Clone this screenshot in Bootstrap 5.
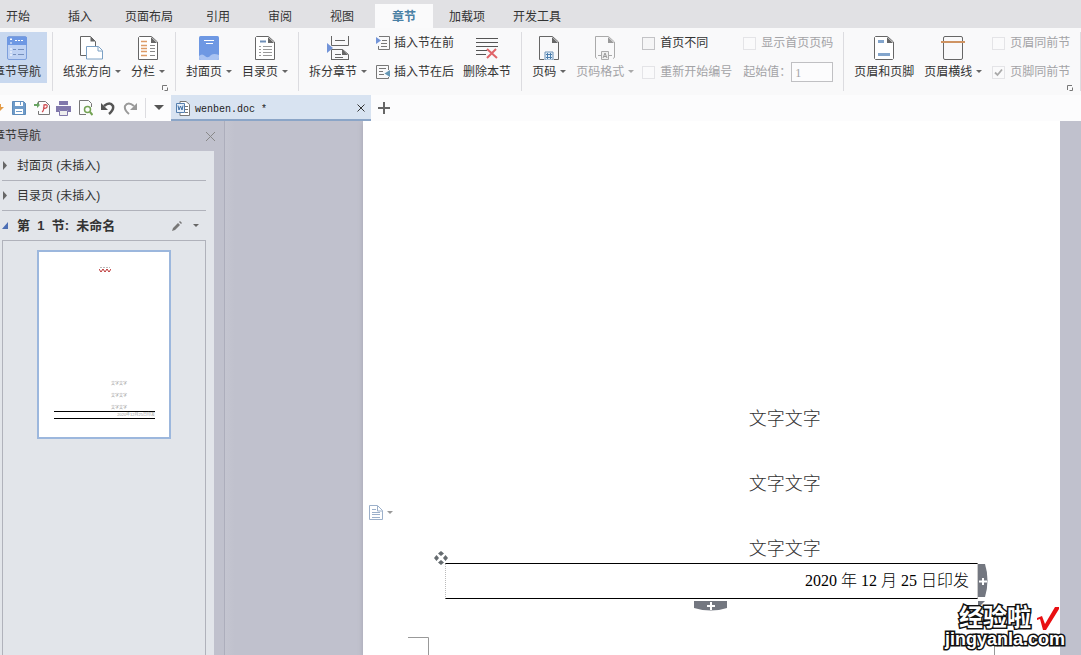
<!DOCTYPE html>
<html lang="zh-CN">
<head>
<meta charset="utf-8">
<meta name="viewport" content="width=device-width, initial-scale=1">
<title>wenben.doc</title>
<link href="https://cdn.jsdelivr.net/npm/bootstrap@5.3.0/dist/css/bootstrap.min.css" rel="stylesheet">
<style>
body{font:12px/16px "Liberation Sans","Noto Sans CJK SC",sans-serif;color:#333;background:#c0c1cd;overflow:hidden}
button{font:inherit;color:inherit;background:none;border:0;padding:0;white-space:nowrap}
svg{display:block;flex:none}
.tabs{background:#e1e1e4;padding-top:4px;gap:4px;margin-left:-11px}
.tabs a{color:#333;height:24px;line-height:26px;min-width:58px;padding:0 12px;text-align:center;text-decoration:none;white-space:nowrap}
.tabs a.active{background:#fafafb;color:#4a80a5;font-weight:700}
.ribbon{background:#f9f9fa;height:67px;padding-top:4px;gap:10px}
.tool{display:flex;flex-direction:column;align-items:center;gap:4px;height:51px;padding-top:4px;flex:none}
.tool.on{background:#c8d8ef;padding-left:6px;padding-right:6px;margin-left:-13px;margin-right:-5px}
.more::after{content:"";display:inline-block;border:3px solid transparent;border-top-color:#666;border-bottom:0;margin-left:4px;vertical-align:3px}
.more.pale::after{border-top-color:#999}
.rule{width:1px;height:59px;background:#dcdce0;flex:none}
.stack{padding-top:3px;gap:13px;white-space:nowrap;flex:none}
.stack button,.stack label{display:flex;align-items:center;height:16px}
.stack button{gap:4px}
.stack label{gap:5px}
.off{color:#a3a3a6}
.off.more::after,.off .more::after{border-top-color:#aaa}
.tick{appearance:none;width:13px;height:13px;border:1px solid #c3c3c6;background:#f5f5f6;margin:0;flex:none}
.tick:disabled{border-color:#e4e4e7;background:#fafafb}
.tick:checked{background:#fafafb url("data:image/svg+xml,%3Csvg xmlns='http://www.w3.org/2000/svg' viewBox='0 0 11 11'%3E%3Cpath d='M2 5.5L4.5 8 9 2.5' fill='none' stroke='%23aaa' stroke-width='1.8'/%3E%3C/svg%3E")}
.startat{width:42px;height:20px;border:1px solid #c0c0c3;background:#fcfcfd;color:#a3a3a6;padding:2px 3px 0;border-radius:0;font:12px/16px "Liberation Serif",serif}
.corner{position:absolute;bottom:4px}
.quick{background:#fcfcfd;height:26px}
.doctab{width:200px;background:#d8e3f1;border-bottom:2px solid #8ba5c7;padding:2px 5px 0;gap:5px}
.doctab a{display:block;font:10px/16px "Liberation Mono",monospace;color:#222;text-decoration:none;padding-top:3px}
.side{width:225px;border-right:1px solid #adaebc;flex:none}
.sidehead{height:30px;padding-right:8px}
.outline{width:214px;background:#e2e5ea;padding:0 8px 0 2px}
.entry{height:30px;border-bottom:1px solid #b0b2bb}
.entry button{display:flex;align-items:center;gap:9px;height:29px}
.entry .current{font-size:13px;font-weight:700;white-space:pre}
.thumbs{border:solid #b0b2bb;border-width:0 1px}
.thumb{width:134px;height:189px;border:2px solid #9cb7dd;background:#fff;margin:9px 0 0 34px;font-size:4px;line-height:6px;color:#999;padding:13px 14px 0 15px}
.tinyline{padding-left:57px;margin-bottom:6px}
.tinytable{border:solid #000;border-width:1px 0;height:8px;text-align:right;margin-top:-6px}
.canvas{background:linear-gradient(90deg,#c4c5d0,#c0c1cd 10px);padding:0 21px 0 138px}
.sheet{background:#fff;padding:284px 82px 0;box-shadow:0 2px 5px #a3a4b2;clip-path:inset(0 0 0 -8px)}
.para{font:300 18px/28px "Liberation Serif","Noto Sans CJK SC",serif;margin:0 0 37px 57%;color:#333}
.para.last{margin-bottom:0}
.issue{width:100%;border-collapse:separate;border-spacing:0}
.issue td{height:36px;border:solid #000;border-width:1px 0;border-left:1px dotted #bbb;border-right:1px solid #ccc;text-align:right;padding:0 8px;font:16px/30px "Liberation Serif","Noto Sans CJK SC",serif;font-weight:300;color:#000}
.handle{position:absolute}
.sign{position:absolute;right:16px;bottom:7px;text-align:center}
.sign span{display:block;color:#fff;-webkit-text-stroke:3px #111;paint-order:stroke fill;font-weight:700;white-space:nowrap}
.sign .cn{font-size:24px;line-height:24px}
.sign .en{font-size:18px;line-height:18px}
</style>
</head>
<body>
<div class="d-flex flex-column vh-100">
<header>
  <nav class="tabs d-flex" aria-label="功能区">
    <a href="#">开始</a><a href="#">插入</a><a href="#">页面布局</a><a href="#">引用</a><a href="#">审阅</a><a href="#">视图</a><a href="#" class="active">章节</a><a href="#">加载项</a><a href="#">开发工具</a>
  </nav>
  <div class="ribbon d-flex align-items-start position-relative">
    <button class="tool on"><svg width="24" height="24"><rect x="2.500" y=".5" width="19" height="23" rx="1.500" fill="#bfd2f3" stroke="#7d9fdc"/><path d="M2 1h20v8H2z" fill="#6e98e3"/><path d="M6 2v3M6 6v2M5 3.500h3M10 4.500h9M6 12v8" stroke="#fff" stroke-dasharray="2 1"/><path d="M8 13.500h3M13 13.500h6M8 18.500h3M13 18.500h6" stroke="#7690bd"/></svg><span>章节导航</span></button>
    <i class="rule"></i>
    <button class="tool"><svg width="24" height="24" fill="#fff"><path d="M6 19.500H.5V.5h10l5 5v5" stroke="#666"/><path d="M10.500.5v5h5z" fill="#666"/><path d="M6.500 10.500h12l4 4v8.500h-16z" stroke="#7ba0c4"/><path d="M18 11v4h4" stroke="#7ba0c4"/></svg><span class="more">纸张方向</span></button>
    <button class="tool"><svg width="24" height="24" fill="none"><path d="M3.500.5h12l6 5.500v17.500H2.500V1.500z" fill="#fff" stroke="#666"/><path d="M15 1v6h6z" fill="#666"/><path d="M5 5.500h6M5 9.500h6M5 12.500h6M5 15.500h6M5 19.500h6" stroke="#dd9b66" stroke-width="1.500"/><path d="M14 9.500h5M14 12.500h5M14 15.500h5M14 19.500h5" stroke="#888"/></svg><span class="more">分栏</span></button>
    <i class="rule"></i>
    <button class="tool"><svg width="24" height="24"><rect x="2" width="20" height="24" rx="1.500" fill="#6e98e3"/><path d="M7 4.500h10M9 7.500h7" stroke="#fff"/><path d="M2 20q3-3 6 0t6-1q3-2 8 0v3q0 2-2 2H4q-2 0-2-2z" fill="#a9c3f2"/></svg><span class="more">封面页</span></button>
    <button class="tool"><svg width="24" height="24" fill="none"><path d="M3.500.5h12l6 5.500v17.500H2.500V1.500z" fill="#fff" stroke="#666"/><path d="M15 1v6h6z" fill="#666"/><path d="M7 5.500h6" stroke="#6e8fb8" stroke-width="2"/><path d="M6 10.500h2M10 10.500h9M6 13.500h2M10 13.500h9M6 16.500h2M10 16.500h9M6 19.500h2M10 19.500h9" stroke="#999"/></svg><span class="more">目录页</span></button>
    <i class="rule"></i>
    <div class="d-flex" style="gap:9px">
      <button class="tool"><svg width="24" height="24" fill="none"><path d="M5.500 0v9.500h17V0M5.500 24V13.500h11l6 5V24M9 4.500h10M9 18.500h6M9 21.500h8M5 23.500h18" stroke="#666"/><path d="M16 13v6h6z" fill="#666"/><path d="M1 7l6 5-6 5z" fill="#7294d8"/></svg><span class="more">拆分章节</span></button>
      <div class="stack d-flex flex-column">
        <button><svg width="14" height="14" fill="none"><path d="M3 .5h10.500v13h-11V10M6 4.500h5M5 7.500h6M5 10.500h6" stroke="#777"/><path d="M0 1l5 3.500L0 8z" fill="#7294d8"/></svg>插入节在前</button>
        <button><svg width="14" height="14" fill="none"><path d="M12.500 5V.5H.5v13h12V12M3 3.500h7M3 6.500h4M3 9.500h5" stroke="#777"/><path d="M14 5L8.500 8.500 14 12z" fill="#6597b5"/></svg>插入节在后</button>
      </div>
      <button class="tool"><svg width="24" height="24" fill="none"><path d="M1 2.500h22M1 6.500h22M1 10.500h22M1 14.500h11M1 18.500h10" stroke="#555"/><path d="M12 13l10 9M21 13l-9 9" stroke="#e06469" stroke-width="2"/></svg><span>删除本节</span></button>
    </div>
    <i class="rule"></i>
    <button class="tool"><svg width="24" height="24" fill="none"><path d="M7 23.500H2.500V.5h13l6 5.500v17.500H17" stroke="#666"/><path d="M15 1v6h6z" fill="#666"/><path d="M8 16h8v8H8z" fill="#e8f1fa" stroke="#6c93b8"/><path d="M10.500 17v6M13.500 17v6M9 18.500h6M9 21.500h6" stroke="#4d7fae"/></svg><span class="more">页码</span></button>
    <button class="tool off"><svg width="24" height="24" fill="none"><path d="M4 22.500l-1.500-1V.5h13l6 5.500v15.500l-1.500 1M5 19.500h3M16 19.500h3" stroke="#aaa"/><path d="M15 1v6h6z" fill="#999"/><path d="M8.500 15.500h7v8h-7z" stroke="#aaa" fill="#eee"/><path d="M10 22l2-5 2 5M11 20.500h2" stroke="#999"/></svg><span class="more">页码格式</span></button>
    <div class="d-flex" style="gap:11px;margin-left:-2px">
      <div class="stack d-flex flex-column"><label><input class="tick" type="checkbox">首页不同</label><label class="off"><input class="tick" type="checkbox" disabled>重新开始编号</label></div>
      <div class="stack d-flex flex-column"><label class="off"><input class="tick" type="checkbox" disabled>显示首页页码</label><label class="off" style="gap:0">起始值：<input class="startat" type="text" value="1" disabled></label></div>
    </div>
    <i class="rule"></i>
    <button class="tool"><svg width="24" height="24" fill="none"><path d="M3.500.5h12l6 5.500v16.500l-1 1h-17l-1-1v-21z" fill="#fff" stroke="#666"/><path d="M15 1v6h6z" fill="#666"/><path d="M6 5.500h6M6 18.500h12" stroke="#83a5cc" stroke-width="3"/></svg><span>页眉和页脚</span></button>
    <button class="tool"><svg width="24" height="24" fill="none"><rect x="2.500" y=".5" width="19" height="23" rx="1.500" stroke="#666"/><path d="M0 6h24" stroke="#cf9463" stroke-width="2"/></svg><span class="more">页眉横线</span></button>
    <div class="stack d-flex flex-column"><label class="off"><input class="tick" type="checkbox" disabled>页眉同前节</label><label class="off"><input class="tick" type="checkbox" checked disabled>页脚同前节</label></div>
    <i class="rule"></i>
    <svg class="corner" style="left:162px" width="6" height="6" fill="none" stroke="#777"><path d="M.5 5V.5H5M2.500 5.500h3v-3"/></svg>
    <svg class="corner" style="right:8px" width="6" height="6" fill="none" stroke="#777"><path d="M.5 5V.5H5M2.500 5.500h3v-3"/></svg>
  </div>
  <div class="quick d-flex">
    <div class="d-flex align-items-center" style="width:171px;gap:8px">
      <button aria-label="打开"><svg width="4" height="14"><path d="M0 3h1v3h3L0 10z" fill="#e39a45"/></svg></button>
      <button aria-label="保存"><svg width="14" height="14" fill="none"><path d="M.5.5h11l2 2v11H.5z" fill="#6f9bc9" stroke="#5e8cbb"/><path d="M3 1h8v4H3zM3 8h8v5H3z" fill="#fff"/><path d="M8.500 1v3M4 10.500h6" stroke="#6f9bc9"/></svg></button>
      <button aria-label="输出为PDF"><svg width="16" height="16" fill="none"><path d="M4.500 4V1.500h7l4 4v9h-11V11" stroke="#777"/><path d="M0 4h3V2l3 3-3 3V6H0z" fill="#6aa564"/><path d="M8 12q2-1 2-7 4-1 3 2-1 2-4 1" stroke="#cf4d52" stroke-width="1.300"/></svg></button>
      <button style="margin-left:-2px" aria-label="打印"><svg width="15" height="15"><path d="M3 0h9v4H3zM0 5h15v6h-3V9H3v2H0z" fill="#8178ac"/><path d="M3.500 9.500h8v5h-8z" fill="#eee" stroke="#8178ac"/></svg></button>
      <button aria-label="打印预览"><svg width="14" height="16" fill="none"><path d="M7 14.500H.5V.5h9l3 3V7" stroke="#777"/><circle cx="8.500" cy="9.500" r="3" stroke="#73a253" stroke-width="1.500"/><path d="M11 12l2.500 3" stroke="#73a253" stroke-width="2"/></svg></button>
      <button aria-label="撤销"><svg width="14" height="14" fill="none"><path d="M3 5q6-5 9 0 1 4-4 8" stroke="#555" stroke-width="2.500"/><path d="M0 2v7h7z" fill="#555"/></svg></button>
      <button aria-label="恢复"><svg width="14" height="14" fill="none"><path d="M11 5Q5 0 2 5q-1 4 4 8" stroke="#999" stroke-width="2"/><path d="M14 2v7H7z" fill="#999"/></svg></button>
      <i class="rule" style="height:20px"></i>
      <button aria-label="自定义"><svg width="10" height="6"><path d="M0 0h10L5 5z" fill="#555"/></svg></button>
    </div>
    <div class="doctab d-flex align-items-center">
      <svg width="14" height="15" fill="none"><path d="M4 2V.5h6l3.500 3v11H4V12M7 5.500h5M9 8.500h3M9 11.500h3" stroke="#777" fill="#fff"/><path d="M.5 2.500h8v9h-8z" fill="#e6effa" stroke="#557fae"/><path d="M2 4.500L3 9l1.500-4L6 9l1-4.500" stroke="#3f6fa5"/></svg>
      <a href="#">wenben.doc *</a>
      <button class="ms-auto" aria-label="关闭"><svg width="10" height="10" stroke="#333"><path d="M1.500 1.500l7 7M8.500 1.500l-7 7"/></svg></button>
    </div>
    <button style="margin-left:7px" aria-label="新建"><svg width="12" height="12" stroke="#666" stroke-width="2"><path d="M6 0v12M0 6h12"/></svg></button>
  </div>
</header>
<div class="d-flex flex-grow-1" style="min-height:0">
  <aside class="side d-flex flex-column">
    <div class="sidehead d-flex align-items-center justify-content-between"><span style="margin-left:-7px">章节导航</span><button aria-label="关闭导航"><svg width="11" height="11" stroke="#888"><path d="M1 1l9 9M10 1l-9 9"/></svg></button></div>
    <div class="outline d-flex flex-column flex-grow-1">
      <div class="entry"><button><svg width="6" height="9"><path d="M1 0v9l4-4.500z" fill="#666"/></svg>封面页 (未插入)</button></div>
      <div class="entry"><button><svg width="6" height="9"><path d="M1 0v9l4-4.500z" fill="#666"/></svg>目录页 (未插入)</button></div>
      <div class="entry d-flex align-items-center"><button><svg width="6" height="7"><path d="M6 0v7H0z" fill="#4d6fb5"/></svg><span class="current">第  1  节:  未命名</span></button>
        <button class="ms-auto" aria-label="重命名"><svg width="10" height="10"><path d="M0 10l1-3 5-5 2 2-5 5zM7 1l1-1 2 2-1 1z" fill="#777"/></svg></button>
        <button class="more" style="margin:0 7px" aria-label="更多"></button></div>
      <div class="thumbs flex-grow-1"><div class="thumb">
        <svg width="12" height="8" style="margin:0 0 108px 45px" fill="none"><path d="M1 2.500h10" stroke="#bbb" stroke-dasharray="2 1"/><path d="M0 4l2 3 2-3 2 3 2-3 2 3 2-3" stroke="#b33"/></svg>
        <div class="tinyline">文字文字</div><div class="tinyline">文字文字</div><div class="tinyline">文字文字</div>
        <div class="tinytable">2020年12月25日印发</div>
      </div></div>
    </div>
  </aside>
  <main class="canvas d-flex flex-grow-1 position-relative">
    <article class="sheet flex-grow-1 position-relative">
      <p class="para">文字文字</p><p class="para">文字文字</p><p class="para last">文字文字</p>
      <div class="position-relative">
        <table class="issue"><tbody><tr><td>2020 年 12 月 25 日印发</td></tr></tbody></table>
        <svg class="handle" style="left:-11px;top:-12px" width="14" height="14" fill="#666c70"><path d="M7 0l3 2.500L7 5 4 2.500zM7 9l3 2.500L7 14l-3-2.500zM2.500 4L5 7l-2.500 3L0 7zM11.500 4L14 7l-2.500 3L9 7z"/></svg>
        <button class="handle" style="right:-10px;top:1px" aria-label="添加列"><svg width="10" height="33"><path d="M0 0h7q5 16 0 33H0z" fill="#737780"/><path d="M5 14v7M1 17.500h8" stroke="#fff" stroke-width="2"/></svg></button>
        <button class="handle" style="left:249px;top:38px" aria-label="添加行"><svg width="33" height="10"><path d="M0 0h33v7q-16 5-33 0z" fill="#737780"/><path d="M17 1v8M13 5h8" stroke="#fff" stroke-width="2"/></svg></button>
        <svg class="handle" style="right:-7px;top:38px" width="7" height="7"><path d="M0 0h7L0 7z" fill="#737780"/></svg>
      </div>
      <button class="handle d-flex align-items-center more pale" style="left:6px;top:384px" aria-label="段落"><svg width="14" height="15" fill="none"><path d="M.5.5h8l5 5v9H.5zM8.500 1v5h5M3 4.500h4M3 7.500h8M3 9.500h8M3 12.500h8" stroke="#9cb0ca"/></svg></button>
      <svg class="handle" style="left:45px;bottom:0" width="21" height="18" fill="none" stroke="#999"><path d="M0 .5h20.500V18"/></svg>
      <svg class="handle" style="right:65px;bottom:0" width="1" height="18"><path d="M.5 0v18" stroke="#999"/></svg>
    </article>
    <div class="sign"><div class="d-flex align-items-center" style="margin-left:14px;gap:5px"><span class="cn">经验啦</span><svg width="24" height="24"><path d="M1 12l5-2 3 8L19 1h4v2L10 24H7L4 13l-3 1z" fill="#e90f12"/></svg></div><span class="en">jingyanla.com</span></div>
  </main>
</div>
</div>
<script src="https://cdn.jsdelivr.net/npm/bootstrap@5.3.0/dist/js/bootstrap.bundle.min.js"></script>
</body>
</html>
